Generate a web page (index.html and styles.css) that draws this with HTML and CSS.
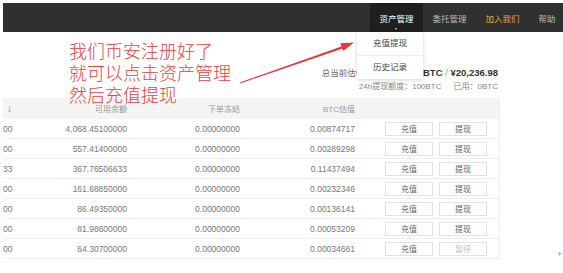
FILE: index.html
```html
<!DOCTYPE html>
<html lang="zh-CN">
<head>
	<meta charset="utf-8">
	<title>资产管理</title>
	<link rel="stylesheet" href="styles.css">
</head>
<body>
	<div class="page">
		<header class="topbar">
			<nav class="menu">
				<div class="menu-item active">
					资产管理
					<span class="caret"></span>
					<div class="dropdown">
						<a class="dropdown-item">充值提现</a>
						<a class="dropdown-item">历史记录</a>
					</div>
				</div>
				<div class="menu-item">委托管理</div>
				<div class="menu-item join">加入我们</div>
				<div class="menu-item">帮助</div>
			</nav>
		</header>

		<section class="summary">
			<p class="total"><span class="label">总当前估值：</span><b>2.84371280BTC</b> <span class="sep">/</span> <b>¥20,236.98</b></p>
			<p class="quota">24h提现额度：100BTC<span class="used">已用：0BTC</span></p>
		</section>

		<div class="assets">
			<div class="row head">
				<span class="cell first">↓</span>
				<span class="cell num">可用余额</span>
				<span class="cell num">下单冻结</span>
				<span class="cell num">BTC估值</span>
				<span class="cell"></span>
			</div>
			<div class="row">
				<span class="cell first">00</span>
				<span class="cell num">4,068.45100000</span>
				<span class="cell num">0.00000000</span>
				<span class="cell num">0.00874717</span>
				<span class="cell actions"><button class="btn">充值</button><button class="btn">提现</button></span>
			</div>
			<div class="row">
				<span class="cell first">00</span>
				<span class="cell num">557.41400000</span>
				<span class="cell num">0.00000000</span>
				<span class="cell num">0.00289298</span>
				<span class="cell actions"><button class="btn">充值</button><button class="btn">提现</button></span>
			</div>
			<div class="row">
				<span class="cell first">33</span>
				<span class="cell num">367.76506633</span>
				<span class="cell num">0.00000000</span>
				<span class="cell num">0.11437494</span>
				<span class="cell actions"><button class="btn">充值</button><button class="btn">提现</button></span>
			</div>
			<div class="row">
				<span class="cell first">00</span>
				<span class="cell num">161.68850000</span>
				<span class="cell num">0.00000000</span>
				<span class="cell num">0.00232346</span>
				<span class="cell actions"><button class="btn">充值</button><button class="btn">提现</button></span>
			</div>
			<div class="row">
				<span class="cell first">00</span>
				<span class="cell num">86.49350000</span>
				<span class="cell num">0.00000000</span>
				<span class="cell num">0.00136141</span>
				<span class="cell actions"><button class="btn">充值</button><button class="btn">提现</button></span>
			</div>
			<div class="row">
				<span class="cell first">00</span>
				<span class="cell num">81.98600000</span>
				<span class="cell num">0.00000000</span>
				<span class="cell num">0.00053209</span>
				<span class="cell actions"><button class="btn">充值</button><button class="btn">提现</button></span>
			</div>
			<div class="row">
				<span class="cell first">00</span>
				<span class="cell num">64.30700000</span>
				<span class="cell num">0.00000000</span>
				<span class="cell num">0.00034661</span>
				<span class="cell actions"><button class="btn">充值</button><button class="btn" disabled>暂停</button></span>
			</div>
		</div>

		<div class="note">
			我们币安注册好了<br>
			就可以点击资产管理<br>
			然后充值提现
		</div>
		<svg class="arrow" width="563" height="273" viewBox="0 0 563 273">
			<polygon points="240,83.5 240.4,82.3 342,46.2 342.8,48.4" fill="#e8373a"></polygon>
			<polygon points="354,42.5 340.2,43.2 343.3,51" fill="#e8373a"></polygon>
		</svg>
		<span class="cross">+</span>
	</div>
</body>
</html>
```

FILE: styles.css
```css
html, body {
	margin: 0;
	padding: 0;
	background: #fff;
}
body {
	font-family: "Liberation Sans", "Noto Sans CJK SC", sans-serif;
	color: #666;
	overflow: hidden;
}
.page {
	position: relative;
	width: 563px;
	height: 273px;
	padding: 3px 0 0 3px;
	box-sizing: border-box;
}

/* top navigation */
.topbar {
	height: 29px;
	background: #303030;
	overflow: visible;
}
.menu {
	display: flex;
	height: 29px;
	padding-left: 367px;
	white-space: nowrap;
}
.menu-item {
	position: relative;
	display: flex;
	align-items: center;
	padding: 0 9.5px;
	font-size: 8.5px;
	color: #bbb;
}
.menu-item.active {
	background: #1f1f1f;
	color: #fff;
}
.menu-item.join {
	color: #e6a23c;
}
.caret {
	position: absolute;
	left: 50%;
	bottom: 2px;
	margin-left: -1.5px;
	border-left: 1.5px solid transparent;
	border-right: 1.5px solid transparent;
	border-top: 2px solid #ddd;
}
.dropdown {
	position: absolute;
	top: 29px;
	right: 0;
	width: 66px;
	background: #fff;
	box-shadow: 0 1px 4px rgba(0, 0, 0, 0.18);
	z-index: 5;
}
.dropdown-item {
	display: block;
	height: 23px;
	line-height: 23px;
	text-align: center;
	font-size: 8.5px;
	color: #444;
}
.dropdown-item + .dropdown-item {
	border-top: 1px solid #eee;
}

/* summary */
.summary {
	width: 495px;
	margin-top: 34px;
	text-align: right;
}
.summary p {
	margin: 0;
	height: 14px;
	line-height: 14px;
}
.total {
	font-size: 9.5px;
	color: #333;
}
.total .label {
	font-size: 8.5px;
	color: #666;
}
.total .sep {
	color: #999;
	font-weight: normal;
}
.quota {
	font-size: 8px;
	color: #888;
}
.quota .used {
	margin-left: 12px;
}

/* assets table */
.assets {
	width: 496px;
	margin-top: 4px;
	border-right: 1px solid #eee;
}
.row {
	display: grid;
	grid-template-columns: 40px 84px 113px 115px 1fr;
	height: 20px;
	align-items: center;
	border-bottom: 1px solid #eee;
	box-sizing: border-box;
	font-size: 8.5px;
	color: #777;
}
.row.head {
	height: 21px;
	background: #f4f4f4;
	border-bottom: 0;
	font-size: 8px;
	color: #999;
}
.cell {
	white-space: nowrap;
}
.row.head .cell.first {
	padding-left: 4px;
	font-size: 10px;
	color: #888;
}
.cell.num {
	text-align: right;
}
.cell.actions {
	display: flex;
	gap: 6px;
	padding-left: 30px;
}
.btn {
	width: 48px;
	height: 14px;
	padding: 0;
	background: #fff;
	border: 1px solid #e3e3e3;
	border-radius: 0;
	font-family: "Liberation Sans", "Noto Sans CJK SC", sans-serif;
	font-size: 8px;
	color: #666;
}
.btn:disabled {
	color: #c4c4c4;
}

/* red annotation over the screenshot */
.note {
	position: absolute;
	left: 69px;
	top: 39px;
	font-family: "Noto Sans CJK SC", sans-serif;
	font-weight: 300;
	font-size: 18px;
	line-height: 22px;
	color: #e8403e;
}
.arrow {
	position: absolute;
	left: 0;
	top: 0;
	pointer-events: none;
}
.cross {
	position: absolute;
	left: 557px;
	top: 249px;
	font-size: 9px;
	color: #999;
}
```
